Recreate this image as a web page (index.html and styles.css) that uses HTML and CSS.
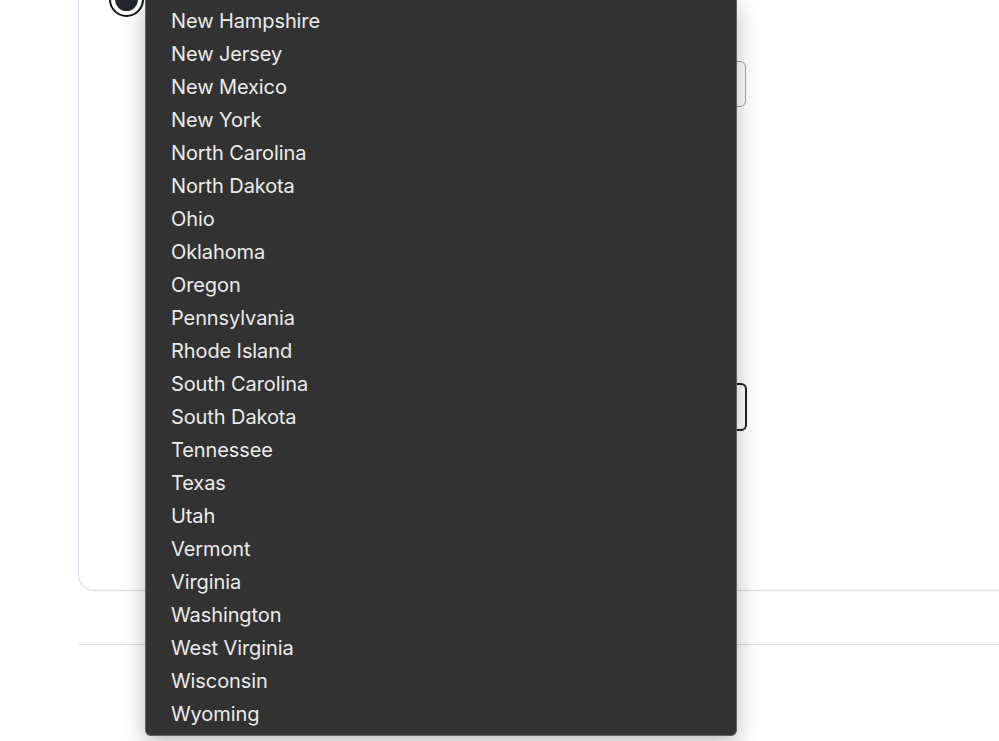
FILE: index.html
```html
<!DOCTYPE html>
<html lang="en">
<head>
<meta charset="utf-8">
<title>State picker</title>
<link rel="stylesheet" href="styles.css">
</head>
<body>
<div class="page">
  <div class="card">
    <span class="radio"><span class="radio-dot"></span></span>
    <div class="field"></div>
    <div class="field field-focus"></div>
  </div>
  <div class="rule"></div>
</div>
<ul class="menu">
  <li>New Hampshire</li>
  <li>New Jersey</li>
  <li>New Mexico</li>
  <li>New York</li>
  <li>North Carolina</li>
  <li>North Dakota</li>
  <li>Ohio</li>
  <li>Oklahoma</li>
  <li>Oregon</li>
  <li>Pennsylvania</li>
  <li>Rhode Island</li>
  <li>South Carolina</li>
  <li>South Dakota</li>
  <li>Tennessee</li>
  <li>Texas</li>
  <li>Utah</li>
  <li>Vermont</li>
  <li>Virginia</li>
  <li>Washington</li>
  <li>West Virginia</li>
  <li>Wisconsin</li>
  <li>Wyoming</li>
</ul>
</body>
</html>
```

FILE: styles.css
```css
html, body {
  margin: 0;
  padding: 0;
  background: #ffffff;
  overflow: hidden;
  font-family: Inter, "Liberation Sans", sans-serif;
}

.page {
  padding-left: 78px;
  margin-right: -40px;
}

.card {
  display: flex;
  flex-direction: column;
  align-items: flex-start;
  border: 1px solid #cfd7e2;
  border-top: none;
  border-radius: 0 0 16px 16px;
  padding: 0 0 159px 30px;
}

.radio {
  box-sizing: border-box;
  width: 35px;
  height: 35px;
  margin-top: -18px;
  border: 2px solid #111;
  border-radius: 50%;
  background: #fff;
  display: flex;
  align-items: center;
  justify-content: center;
}

.radio-dot {
  width: 23px;
  height: 23px;
  border-radius: 50%;
  background: #24272b;
}

.field {
  box-sizing: border-box;
  width: 596px;
  height: 46px;
  margin: 44px 0 0 41px;
  border: 1px solid #9aa3ae;
  border-radius: 6px;
  background: #fff;
}

.field-focus {
  height: 48px;
  margin-top: 276px;
  width: 597px;
  border: 2px solid #1d2125;
}

.rule {
  margin-top: 53px;
  height: 1px;
  background: #d3dae4;
}

.menu {
  position: absolute;
  left: 145px;
  top: 0;
  box-sizing: border-box;
  width: 592px;
  margin: 0;
  padding: 5px 0 4px;
  list-style: none;
  background: #323232;
  border: 1px solid #626262;
  border-top: none;
  border-radius: 0 0 6px 6px;
  box-shadow: 0 6px 22px rgba(0, 0, 0, 0.28);
}

.menu li {
  height: 33px;
  line-height: 33px;
  padding-left: 25px;
  color: #ececec;
  font-size: 20px;
  letter-spacing: -0.1px;
}
```
